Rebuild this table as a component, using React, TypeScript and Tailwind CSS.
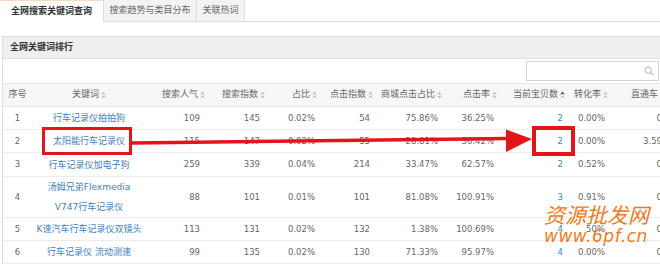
import React from "react";

type Row = {
  n: string;
  kw: React.ReactNode;
  v: string[];
  h: string;
};

const rows: Row[] = [
  { n: "1", kw: "行车记录仪拍拍狗", v: ["109", "145", "0.02%", "54", "75.86%", "36.25%", "2", "0.00%", "0"], h: "h-[23px]" },
  { n: "2", kw: "太阳能行车记录仪", v: ["115", "147", "0.02%", "55", "28.81%", "36.42%", "2", "0.00%", "3.59"], h: "h-[23px]" },
  { n: "3", kw: "行车记录仪加电子狗", v: ["259", "339", "0.04%", "214", "33.47%", "62.57%", "2", "0.52%", "0"], h: "h-[24px]" },
  { n: "4", kw: "汤姆兄弟Flexmedia V747行车记录仪", v: ["88", "101", "0.01%", "101", "81.08%", "100.91%", "3", "0.91%", "0"], h: "h-[41px]" },
  { n: "5", kw: "K速汽车行车记录仪双镜头", v: ["113", "131", "0.02%", "132", "1.38%", "100.69%", "4", "50%", "0"], h: "h-[23px]" },
  { n: "6", kw: "行车记录仪 流动测速", v: ["99", "135", "0.02%", "130", "71.33%", "95.97%", "4", "0.00%", "0"], h: "h-[23px]" },
];

const headers = ["搜索人气", "搜索指数", "占比", "点击指数", "商城点击占比", "点击率", "当前宝贝数", "转化率", "直通车"];

const colW = [
  "w-[62px]",
  "w-[60px]",
  "w-[54px]",
  "w-[56px]",
  "w-[70px]",
  "w-[52px]",
  "w-[70px]",
  "w-[48px]",
  "w-[52px]",
];
const headPad = [
  "justify-end pr-[3px]",
  "justify-end pr-[3px]",
  "justify-end pr-[5px]",
  "justify-end pr-[5px]",
  "justify-end pr-[6px]",
  "justify-end pr-[3px]",
  "justify-end pr-[5px]",
  "justify-end pr-[10px]",
  "justify-end pr-[5px]",
];
const valPad = [
  "justify-end pr-[8px]",
  "justify-end pr-[8px]",
  "justify-end pr-[7px]",
  "justify-end pr-[8px]",
  "justify-end pr-[10px]",
  "justify-end pr-[6px]",
  "justify-end pr-[7px]",
  "justify-end pr-[13px]",
  "justify-end pr-[8px]",
];

function SortIcon({ active }: { active?: boolean }) {
  return (
    <svg width="5" height="8" viewBox="0 0 5 8" className="ml-[2px] shrink-0">
      <polygon points="2.5,0.5 4.8,3.2 0.2,3.2" fill={active ? "#555" : "#c4c4c4"} />
      <polygon points="0.2,4.8 4.8,4.8 2.5,7.5" fill="#c4c4c4" />
    </svg>
  );
}

export default function App() {
  return (
    <div
      className="relative w-[660px] h-[264px] overflow-hidden bg-white text-[#666]"
      style={{ fontFamily: '"DejaVu Sans", "Noto Sans CJK SC", sans-serif' }}
    >
      {/* Tabs */}
      <div className="flex h-[22px] border-b border-[#dedede]">
        <div className="w-[103px] h-[22px] bg-white border-t border-[#f3dcc0] flex items-center justify-center text-[9px] font-bold text-[#333] -mb-px">
          全网搜索关键词查询
        </div>
        <div className="w-[94px] bg-[#f3f3f3] border-l border-r border-[#dedede] flex items-center justify-center text-[9px] text-[#666]">
          搜索趋势与类目分布
        </div>
        <div className="w-[48px] bg-[#f3f3f3] border-r border-[#dedede] flex items-center justify-center text-[9px] text-[#666]">
          关联热词
        </div>
      </div>

      {/* Panel */}
      <div className="mt-[14px] ml-[2px] w-[661px] border border-[#dedede]">
        <div className="h-[22px] bg-[#efefef] border-b border-[#e2e2e2] flex items-center pl-[7px] text-[9px] font-bold text-[#333]">
          全网关键词排行
        </div>
        <div className="h-[25px] flex items-center justify-end pr-[3px] border-b border-[#e6e6e6]">
          <div className="w-[133px] h-[20px] border border-[#d4d4d4] bg-white flex items-center justify-end pr-[4px]">
            <svg width="10" height="10" viewBox="0 0 10 10">
              <circle cx="4.2" cy="4.2" r="3.2" fill="none" stroke="#b5b5b5" strokeWidth="1" />
              <line x1="6.6" y1="6.6" x2="9.2" y2="9.2" stroke="#b5b5b5" strokeWidth="1.2" />
            </svg>
          </div>
        </div>

        {/* Table */}
        <div className="w-[680px]">
          <div className="flex h-[23px] bg-[#f7f7f7] border-b border-[#e6e6e6] text-[9px] text-[#666]">
            <div className="w-[29px] flex items-center justify-center">序号</div>
            <div className="w-[114px] flex items-center justify-center">
              关键词
              <SortIcon />
            </div>
            {headers.map((h, i) => (
              <div key={h} className={`${colW[i]} flex items-center ${headPad[i]}`}>
                {h}
                <SortIcon active={i === 6} />
              </div>
            ))}
          </div>
          {rows.map((r) => (
            <div key={r.n} className={`flex ${r.h} border-b border-[#ececec] text-[8.5px] text-[#666]`}>
              <div className="w-[29px] flex items-center justify-center">{r.n}</div>
              <div className="w-[114px] flex items-center justify-center px-[3px] text-center text-[9px] leading-[20px] text-[#3d80c6]">
                {r.kw}
              </div>
              {r.v.map((v, i) => (
                <div
                  key={i}
                  className={`${colW[i]} flex items-center ${valPad[i]} ${i === 6 ? "text-[#3d80c6]" : ""}`}
                >
                  {v}
                </div>
              ))}
            </div>
          ))}
        </div>
      </div>

      {/* Red annotation */}
      <svg
        className="absolute left-0 top-0 pointer-events-none"
        width="660"
        height="264"
        viewBox="0 0 660 264"
      >
        <rect x="43.5" y="128.5" width="87" height="25" fill="none" stroke="#e5141b" strokeWidth="3" />
        <line x1="132" y1="143" x2="508" y2="138.5" stroke="#e5141b" strokeWidth="3.5" />
        <polygon points="506,129.5 532,139 506,152" fill="#e5141b" />
        <rect x="534" y="128" width="39" height="26" fill="none" stroke="#e5141b" strokeWidth="4" />
      </svg>

      {/* Watermark */}
      <div className="absolute left-[544px] top-[204px] text-[#f07a22] pointer-events-none leading-none">
        <div
          className="text-[21px] tracking-[0px] italic"
          style={{ fontFamily: '"Noto Sans CJK SC", sans-serif' }}
        >
          资源批发网
        </div>
        <div
          className="mt-[3px] text-[17px] italic tracking-[0.5px]"
          style={{ fontFamily: '"DejaVu Sans", sans-serif' }}
        >
          www.6pf.cn
        </div>
      </div>
    </div>
  );
}
